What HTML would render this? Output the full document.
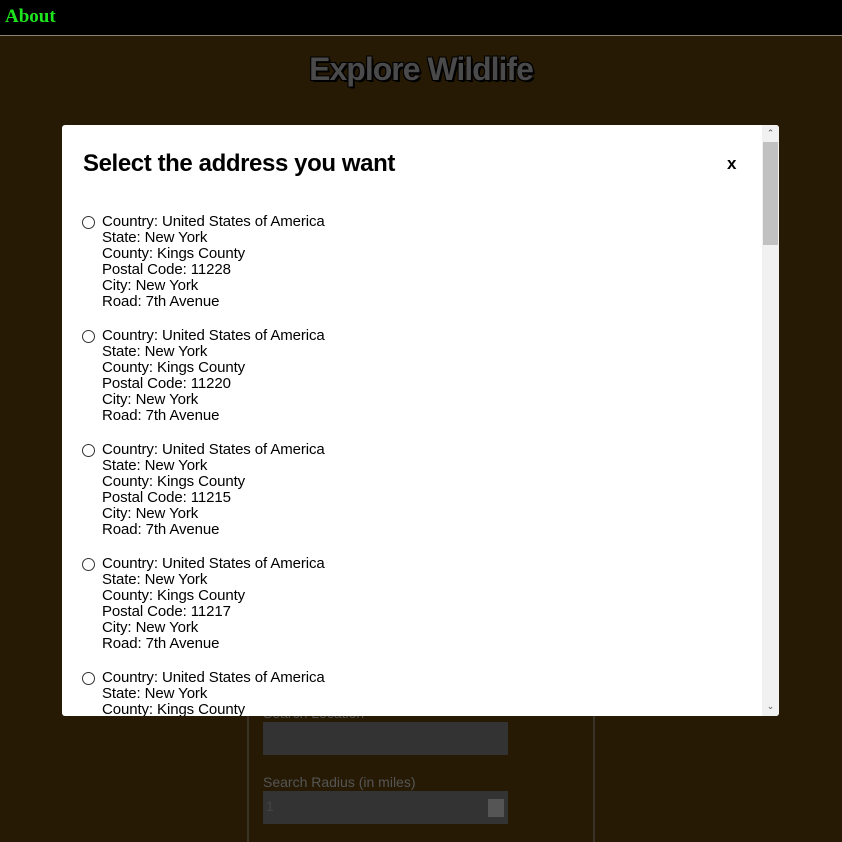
<!DOCTYPE html>
<html><head><meta charset="utf-8"><style>
*{margin:0;padding:0;box-sizing:border-box}
html,body{width:842px;height:842px;overflow:hidden}
body{background:#261a05;font-family:"Liberation Sans",sans-serif;position:relative}
.nav{position:absolute;left:0;top:0;width:842px;height:36px;background:#000;border-bottom:1px solid #8a8070}
.nav span{position:absolute;left:5px;top:6px;color:#1ee61e;font-family:"Liberation Serif",serif;font-weight:bold;font-size:19px}
h1{position:absolute;left:0;width:842px;top:51px;text-align:center;color:#4a4a4a;font-size:32px;font-weight:bold;text-shadow:2px 2px 0 #000,-1px -1px 0 #000,1px -1px 0 #000,-1px 1px 0 #000;letter-spacing:-1px}
.panel{position:absolute;left:247px;top:700px;width:348px;height:150px;border-left:2px solid #3a3327;border-right:2px solid #3a3327}
.lbl{position:absolute;left:263px;color:#555;font-size:14px}
.inp{position:absolute;left:263px;width:245px;height:33px;background:#333}
.modal{position:absolute;left:62px;top:125px;width:717px;height:591px;background:#fff;border-radius:3px;overflow:hidden}
.modal h2{position:absolute;left:21px;top:25px;font-size:24px;font-weight:bold;color:#000;letter-spacing:-0.4px}
.x{position:absolute;left:665px;top:29px;font-size:17px;font-weight:bold}
.sb{position:absolute;right:0;top:0;width:17px;height:591px;background:#f1f1f1}
.sb .th{position:absolute;left:1px;top:17px;width:15px;height:103px;background:#c1c1c1}
.sb .a{position:absolute;left:0;width:17px;text-align:center;font-size:9px;color:#555}
.ent{position:absolute;left:20px;font-size:15px;line-height:16px;color:#000;letter-spacing:-0.1px}
.ent i{position:absolute;left:0;top:2px;width:13px;height:13px;border:1px solid #333;border-radius:50%}
.ent div{margin-left:20px}
</style></head><body>
<div class="nav"><span>About</span></div>
<h1>Explore Wildlife</h1>
<div class="panel"></div>
<div class="lbl" style="top:705px">Search Location</div>
<div class="inp" style="top:722px"></div>
<div class="lbl" style="top:774px">Search Radius (in miles)</div>
<div class="inp" style="top:791px"><span style="position:absolute;left:3px;top:7px;color:#444;font-size:14px">1</span><span style="position:absolute;right:4px;top:8px;width:16px;height:18px;background:#555"></span></div>
<div class="modal">
<h2>Select the address you want</h2>
<div class="x">x</div>
<div class="ent" style="top:89px"><i></i><div>Country: United States of America<br>State: New York<br>County: Kings County<br>Postal Code: 11228<br>City: New York<br>Road: 7th Avenue</div></div>
<div class="ent" style="top:203px"><i></i><div>Country: United States of America<br>State: New York<br>County: Kings County<br>Postal Code: 11220<br>City: New York<br>Road: 7th Avenue</div></div>
<div class="ent" style="top:317px"><i></i><div>Country: United States of America<br>State: New York<br>County: Kings County<br>Postal Code: 11215<br>City: New York<br>Road: 7th Avenue</div></div>
<div class="ent" style="top:431px"><i></i><div>Country: United States of America<br>State: New York<br>County: Kings County<br>Postal Code: 11217<br>City: New York<br>Road: 7th Avenue</div></div>
<div class="ent" style="top:545px"><i></i><div>Country: United States of America<br>State: New York<br>County: Kings County<br>Postal Code: 11217<br>City: New York<br>Road: 7th Avenue</div></div>
<div class="sb"><div class="a" style="top:3px">&#8963;</div><div class="th"></div><div class="a" style="top:576px">&#8964;</div></div>
</div>
</body></html>
